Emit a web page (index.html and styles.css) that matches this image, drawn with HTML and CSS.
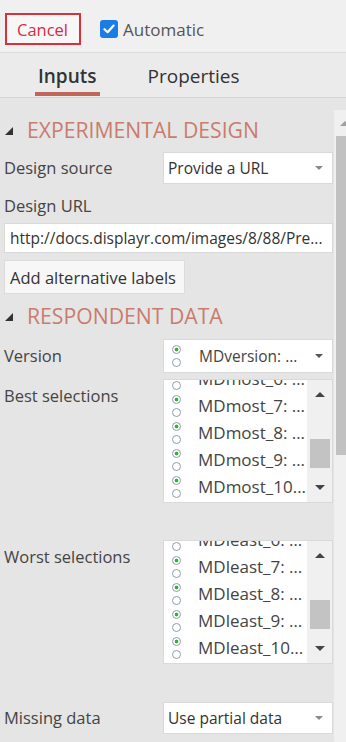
FILE: index.html
```html
<!DOCTYPE html>
<html lang="en">
<head>
    <meta charset="UTF-8">
    <meta name="viewport" content="width=device-width, initial-scale=1.0">
    <title>Inputs</title>
    <link rel="stylesheet" href="styles.css">
</head>
<body>
    <div class="toolbar">
        <button class="cancel-btn">Cancel</button>
        <label class="auto-check">
            <span class="checkbox">
                <svg width="12" height="10" viewBox="0 0 12 10"><path d="M1.5 5.2 L4.6 8.2 L10.6 1.6" fill="none" stroke="#fff" stroke-width="2.2" stroke-linecap="round" stroke-linejoin="round"/></svg>
            </span>
            Automatic
        </label>
    </div>

    <div class="tabs">
        <div class="tab active">Inputs</div>
        <div class="tab">Properties</div>
    </div>

    <div class="main">
        <div class="panel">
            <h2 class="section-title first">
                <svg class="caret" width="8" height="8" viewBox="0 0 8 8"><polygon points="8,0 8,8 0,8" fill="#333"/></svg>
                EXPERIMENTAL DESIGN
            </h2>

            <div class="field">
                <span class="field-label">Design source</span>
                <div class="select">
                    <span>Provide a URL</span>
                    <span class="arrow"></span>
                </div>
            </div>

            <div class="field-label stacked">Design URL</div>
            <div class="text-input">http://docs.displayr.com/images/8/88/Pre...</div>

            <button class="plain-btn">Add alternative labels</button>

            <h2 class="section-title">
                <svg class="caret" width="8" height="8" viewBox="0 0 8 8"><polygon points="8,0 8,8 0,8" fill="#333"/></svg>
                RESPONDENT DATA
            </h2>

            <div class="field version">
                <span class="field-label">Version</span>
                <div class="select tall">
                    <span class="radios"><span class="radio on"></span><span class="radio"></span></span>
                    <span class="opt-text narrow">MDversion: …</span>
                    <span class="arrow dark"></span>
                </div>
            </div>

            <div class="field list-field">
                <span class="field-label">Best selections</span>
                <div class="listbox">
                    <div class="list-items">
                        <div class="list-inner">
                            <div class="opt"><span class="radios"><span class="radio on"></span><span class="radio"></span></span><span class="opt-text">MDmost_6: …</span></div>
                            <div class="opt"><span class="radios"><span class="radio on"></span><span class="radio"></span></span><span class="opt-text">MDmost_7: …</span></div>
                            <div class="opt"><span class="radios"><span class="radio on"></span><span class="radio"></span></span><span class="opt-text">MDmost_8: …</span></div>
                            <div class="opt"><span class="radios"><span class="radio on"></span><span class="radio"></span></span><span class="opt-text">MDmost_9: …</span></div>
                            <div class="opt"><span class="radios"><span class="radio on"></span><span class="radio"></span></span><span class="opt-text">MDmost_10…</span></div>
                        </div>
                    </div>
                    <div class="list-scroll">
                        <span class="tri-up"></span>
                        <span class="list-thumb"></span>
                        <span class="tri-down"></span>
                    </div>
                </div>
            </div>

            <div class="field list-field worst">
                <span class="field-label">Worst selections</span>
                <div class="listbox">
                    <div class="list-items">
                        <div class="list-inner">
                            <div class="opt"><span class="radios"><span class="radio on"></span><span class="radio"></span></span><span class="opt-text">MDleast_6: …</span></div>
                            <div class="opt"><span class="radios"><span class="radio on"></span><span class="radio"></span></span><span class="opt-text">MDleast_7: …</span></div>
                            <div class="opt"><span class="radios"><span class="radio on"></span><span class="radio"></span></span><span class="opt-text">MDleast_8: …</span></div>
                            <div class="opt"><span class="radios"><span class="radio on"></span><span class="radio"></span></span><span class="opt-text">MDleast_9: …</span></div>
                            <div class="opt"><span class="radios"><span class="radio on"></span><span class="radio"></span></span><span class="opt-text">MDleast_10…</span></div>
                        </div>
                    </div>
                    <div class="list-scroll">
                        <span class="tri-up"></span>
                        <span class="list-thumb"></span>
                        <span class="tri-down"></span>
                    </div>
                </div>
            </div>

            <div class="field missing">
                <span class="field-label">Missing data</span>
                <div class="select">
                    <span>Use partial data</span>
                    <span class="arrow"></span>
                </div>
            </div>
        </div>

        <div class="vscroll">
            <span class="vscroll-up"></span>
            <span class="vscroll-thumb"></span>
        </div>
    </div>
</body>
</html>
```

FILE: styles.css
```css
body {
    margin: 0;
    width: 346px;
    height: 742px;
    overflow: hidden;
    font-family: 'Open Sans', 'Segoe UI', sans-serif;
    background: #e5e5e5;
    color: #444;
}
.toolbar {
    height: 46px;
    padding: 6px 0 0 5px;
    display: flex;
    align-items: center;
    background: #f0f0f0;
    border-bottom: 1px solid #dcdcdc;
}
.cancel-btn {
    width: 76px;
    height: 32px;
    box-sizing: border-box;
    border: 2px solid #d9303c;
    background: #f7f7f7;
    color: #d42c45;
    font-family: 'Open Sans', sans-serif;
    font-size: 16.5px;
    padding: 0 0 0 10px;
    text-align: left;
}
.auto-check {
    display: flex;
    align-items: center;
    margin-left: 19px;
    font-size: 17px;
    color: #555;
}
.checkbox {
    width: 18px;
    height: 18px;
    margin-right: 5px;
    border-radius: 3px;
    background: #1a7de6;
    display: flex;
    align-items: center;
    justify-content: center;
}
.tabs {
    height: 44px;
    display: flex;
    align-items: flex-end;
    padding-left: 35px;
    gap: 45px;
    background: #ebebeb;
    border-bottom: 1px solid #d5d5d5;
}
.tab {
    padding: 10px 3px 3px;
    line-height: 26px;
    font-size: 19px;
    color: #333;
    border-bottom: 4px solid transparent;
    margin-bottom: 1px;
}
.tab.active {
    font-weight: 600;
    border-bottom-color: #c0675a;
}
.main {
    display: flex;
    height: 644px;
}
.panel {
    flex: 0 0 334px;
    box-sizing: border-box;
    padding: 0 1px 0 4px;
}
.section-title {
    display: flex;
    align-items: center;
    margin: 8px 0 0;
    font-size: 21.2px;
    line-height: 28px;
    font-weight: 400;
    color: #c97c6d;
}
.section-title.first {
    margin-top: 18px;
}
.caret {
    margin: 2px 14px 0 1px;
}
.field {
    display: flex;
    align-items: center;
    margin-top: 8px;
}
.field-label {
    flex: none;
    width: 159px;
    font-size: 16.5px;
    line-height: 22px;
}
.field-label.stacked {
    margin-top: 11px;
}
.select {
    width: 170px;
    height: 32px;
    box-sizing: border-box;
    border: 1px solid #d9d9d9;
    background: #fff;
    display: flex;
    align-items: center;
    padding: 0 9px 0 4px;
    font-size: 15.5px;
    color: #333;
}
.select.tall {
    height: 34px;
    padding-left: 8px;
}
.arrow {
    margin-left: auto;
    border-left: 4px solid transparent;
    border-right: 4px solid transparent;
    border-top: 4px solid #8a8a8a;
}
.arrow.dark {
    border-top-color: #555;
}
.text-input {
    margin-top: 6px;
    height: 30px;
    box-sizing: border-box;
    border: 1px solid #d9d9d9;
    background: #fff;
    padding: 0 5px;
    font-size: 15.5px;
    line-height: 28px;
    color: #333;
    white-space: nowrap;
    overflow: hidden;
}
.plain-btn {
    display: block;
    margin-top: 7px;
    height: 34px;
    padding: 0 8px 0 5px;
    border: 1px solid #dcdcdc;
    background: #f7f7f7;
    font-family: 'Open Sans', sans-serif;
    font-size: 16.5px;
    color: #333;
}
.field.version {
    margin-top: 9px;
}
.radios {
    display: flex;
    flex-direction: column;
    gap: 4px;
    flex: none;
}
.radio {
    width: 9px;
    height: 9px;
    box-sizing: border-box;
    border: 1px solid #8d9eae;
    border-radius: 50%;
    background: #fff;
}
.radio.on {
    background: radial-gradient(circle, #2fb52f 0 1.6px, #fff 2.2px);
}
.opt-text {
    margin-left: 18px;
    font-size: 17px;
    color: #444;
    white-space: nowrap;
}
.opt-text.narrow {
    font-size: 15.5px;
}
.list-field {
    align-items: flex-start;
    margin-top: 6px;
}
.list-field .field-label {
    margin-top: 6px;
}
.list-field.worst {
    margin-top: 37px;
}
.listbox {
    width: 170px;
    height: 124px;
    box-sizing: border-box;
    border: 1px solid #d9d9d9;
    background: #fff;
    display: flex;
    overflow: hidden;
}
.list-items {
    flex: 1;
    overflow: hidden;
}
.list-inner {
    margin-top: -15px;
}
.opt {
    height: 27px;
    display: flex;
    align-items: center;
    padding-left: 8px;
}
.opt .opt-text {
    margin-left: 17px;
}
.list-scroll {
    flex: 0 0 25px;
    background: #f0f0f0;
    display: flex;
    flex-direction: column;
    align-items: center;
    padding-top: 12px;
}
.tri-up {
    border-left: 5px solid transparent;
    border-right: 5px solid transparent;
    border-bottom: 5px solid #444;
}
.tri-down {
    margin-top: 17px;
    border-left: 5px solid transparent;
    border-right: 5px solid transparent;
    border-top: 5px solid #444;
}
.list-thumb {
    margin-top: 42px;
    width: 20px;
    height: 29px;
    background: #c3c3c3;
}
.field.missing {
    margin-top: 38px;
}
.vscroll {
    width: 12px;
    margin-top: 12px;
    background: #f0f0f0;
    overflow: hidden;
    display: flex;
    flex-direction: column;
}
.vscroll-up {
    margin: 11px 0 0 6px;
    width: 0;
    border-left: 5px solid transparent;
    border-right: 5px solid transparent;
    border-bottom: 5px solid #a0a0a0;
}
.vscroll-thumb {
    margin: 10px 0 0 2px;
    width: 10px;
    height: 319px;
    background: #c1c1c1;
}
```
